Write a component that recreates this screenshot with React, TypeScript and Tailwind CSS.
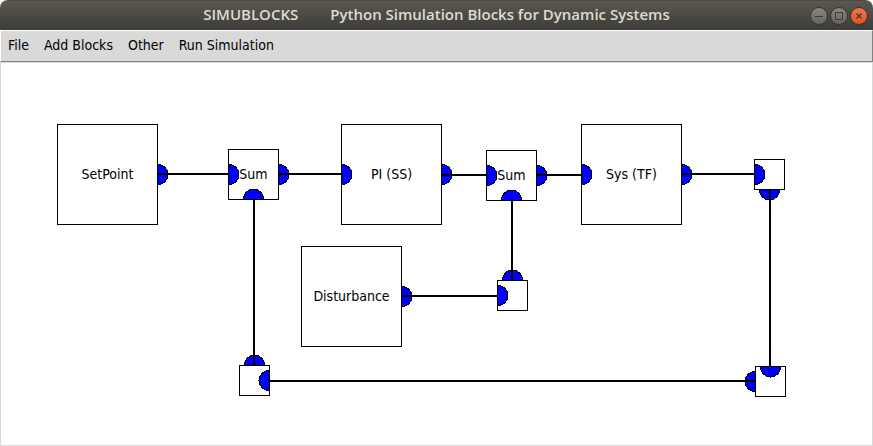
import React from "react";

const menus = ["File", "Add Blocks", "Other", "Run Simulation"];

const blocks = [
  { label: "SetPoint", box: "left-[56px] top-[61px] size-[101px]" },
  { label: "Sum", box: "left-[227px] top-[86px] size-[51px]" },
  { label: "PI (SS)", box: "left-[340px] top-[61px] size-[101px]" },
  { label: "Sum", box: "left-[485px] top-[87px] size-[51px]" },
  { label: "Sys (TF)", box: "left-[580px] top-[61px] size-[101px]" },
  { label: "", box: "left-[753px] top-[96px] size-[31px]" },
  { label: "Disturbance", box: "left-[300px] top-[183px] size-[101px]" },
  { label: "", box: "left-[496px] top-[217px] size-[31px]" },
  { label: "", box: "left-[238px] top-[302px] size-[31px]" },
  { label: "", box: "left-[754px] top-[303px] size-[31px]" },
];

type Side = "right" | "left" | "up" | "down";

const arcs: Record<Side, string> = {
  right: "M0.5 -10 A10 10 0 0 1 0.5 10",
  left: "M-0.5 -10 A10 10 0 0 0 -0.5 10",
  up: "M-10 -0.5 A10 10 0 0 1 10 -0.5",
  down: "M-10 0.5 A10 10 0 0 0 10 0.5",
};

const ports: [number, number, Side][] = [
  [156.5, 111.5, "right"],
  [227.5, 111.5, "right"],
  [277.5, 111.5, "right"],
  [252.5, 136.5, "up"],
  [340.5, 111.5, "right"],
  [440.5, 111.5, "right"],
  [485.5, 112.5, "right"],
  [535.5, 112.5, "right"],
  [510.5, 137.5, "up"],
  [580.5, 111.5, "right"],
  [680.5, 111.5, "right"],
  [753.5, 111.5, "right"],
  [768.5, 126.5, "down"],
  [400.5, 233.5, "right"],
  [496.5, 232.5, "right"],
  [511.5, 217.5, "up"],
  [253.5, 302.5, "up"],
  [268.5, 317.5, "left"],
  [769.5, 303.5, "down"],
  [754.5, 318.5, "left"],
];

const wires = [
  "M157 111H228",
  "M278 111H341",
  "M441 112H486",
  "M536 112H581",
  "M681 111H754",
  "M769 127V304",
  "M253 137V303",
  "M511 138V218",
  "M401 233H497",
  "M269 318H755",
];

function WindowButton({ name, tone, children }: { name: string; tone: string; children: React.ReactNode }) {
  return (
    <button aria-label={name} className={`size-[18px] rounded-full border border-[#34332e] bg-linear-to-b ${tone}`}>
      <svg viewBox="0 0 16 16" className="block size-4" fill="none" stroke="#3c3b37" strokeWidth="1">
        {children}
      </svg>
    </button>
  );
}

export default function App() {
  return (
    <div className="flex h-screen flex-col bg-white font-['DejaVu_Sans_Condensed','DejaVu_Sans',sans-serif] text-sm text-black">
      <header className="relative flex h-[30px] shrink-0 items-center justify-end rounded-t-lg border-t border-[#4b4a44] bg-linear-to-b from-[#5b584f] to-[#3d3c37] pr-[5px]">
        <h1 className="absolute inset-x-0 flex justify-center gap-8 pb-0.5 font-['Open_Sans',sans-serif] text-[15px] font-semibold text-[#dfdbd2]">
          <span>SIMUBLOCKS</span>
          <span>Python Simulation Blocks for Dynamic Systems</span>
        </h1>
        <div className="relative flex gap-0.5">
          <WindowButton name="Minimize" tone="from-[#8a8880] to-[#66645d]">
            <path d="M4 8.5H12" />
          </WindowButton>
          <WindowButton name="Maximize" tone="from-[#8a8880] to-[#66645d]">
            <path d="M4.500 4.500H11.500V11.500H4.500Z" />
          </WindowButton>
          <WindowButton name="Close" tone="from-[#f4764a] to-[#e2501f]">
            <path d="M5.500 5.500L10.500 10.500M10.500 5.500L5.500 10.500" strokeWidth="1.300" />
          </WindowButton>
        </div>
      </header>
      <nav className="flex h-8 shrink-0 items-center gap-[15px] border border-t-white border-r-[#828282] border-b-[#828282] border-l-white bg-[#d9d9d9] px-[7px] pb-0.5">
        {menus.map((menu) => (
          <button key={menu}>{menu}</button>
        ))}
      </nav>
      <main className="relative min-h-0 flex-1 overflow-hidden border border-[#d9d9d9] bg-white">
        <svg className="absolute inset-0 size-full" shapeRendering="crispEdges" aria-hidden="true">
          {ports.map(([x, y, side]) => (
            <path key={`${x},${y}`} d={arcs[side]} transform={`translate(${x} ${y})`} fill="#0000ff" stroke="#000" />
          ))}
          {wires.map((d) => (
            <path key={d} d={d} stroke="#000" strokeWidth="2" />
          ))}
        </svg>
        {blocks.map(({ label, box }) => (
          <div key={box} className={`absolute flex items-center justify-center border border-black pb-0.5 ${box}`}>
            {label}
          </div>
        ))}
      </main>
    </div>
  );
}
